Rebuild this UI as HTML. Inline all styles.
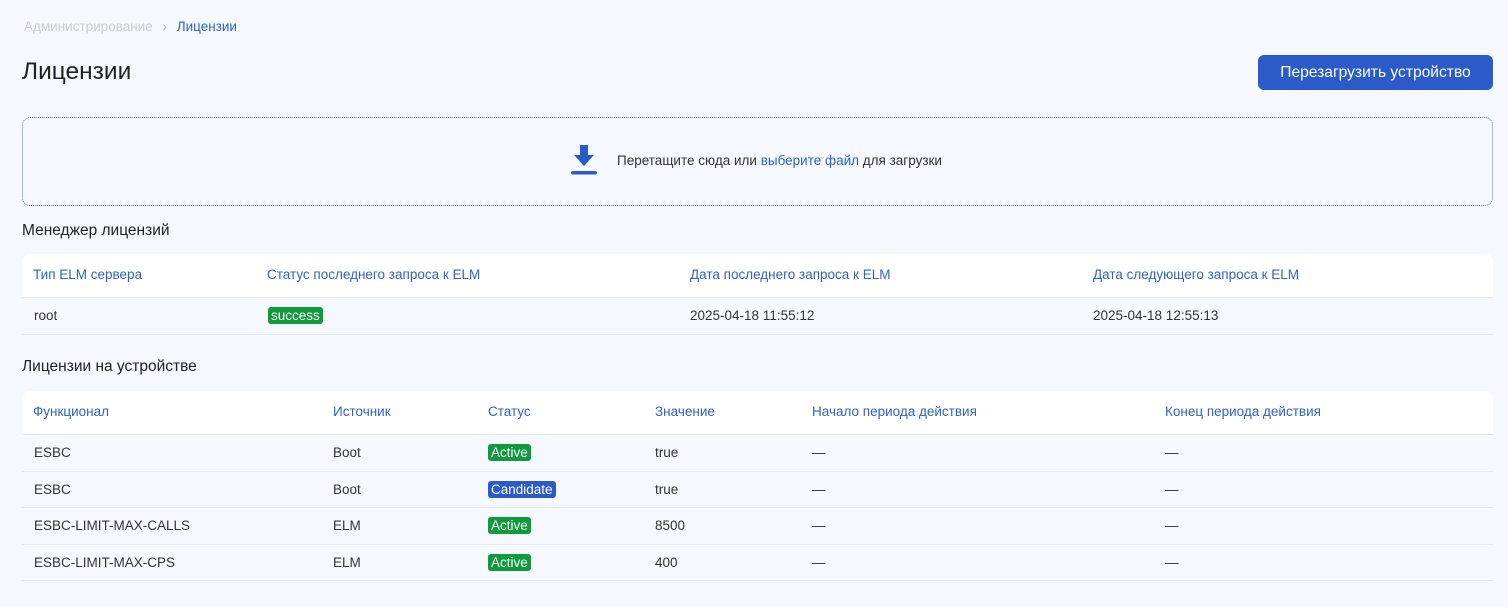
<!DOCTYPE html>
<html><head><meta charset="utf-8"><style>
body{margin:0;background:#f5f8ff;font-family:"Liberation Sans","DejaVu Sans",sans-serif;font-size:13.5px;color:#333;width:1508px;height:607px;position:relative;overflow:hidden}
.a{position:absolute;white-space:nowrap}
.bc{top:19px;left:24px;font-size:13.5px;color:#ccc}
.bc span{color:#2f63c8}
h1{position:absolute;left:22px;top:58px;margin:0;font-size:24.5px;font-weight:normal;color:#222}
.btn{position:absolute;left:1258px;top:55px;width:235px;height:35px;background:#2a5bc9;border-radius:6px;color:#fff;font-size:15.6px;text-align:center;line-height:35px}
.drop{position:absolute;left:22px;top:117px;width:1469px;height:87px;border:1px dotted #5a78c8;border-radius:8px}
.h2{font-size:15.5px;color:#222}
.tb{position:absolute;left:22px;width:1471px}
.hd{background:#fff;border-radius:8px 8px 0 0;height:43px;position:relative;border-bottom:1px solid #e4e8f0}
.row{height:35.6px;position:relative;border-bottom:1px solid #e4e8f0}
.hd .c{color:#2f63c8;top:13px}
.c{position:absolute;top:10px;white-space:nowrap}
.bd{color:#fff;padding:1px 3px;border-radius:3px;background:#0f9a3c}
.bl{background:#2a5bc9}
</style></head><body>
<div class="a bc">Администрирование <span style="color:#9bb6e6;margin:0 6px">›</span> <span>Лицензии</span></div>
<h1>Лицензии</h1>
<div class="btn">Перезагрузить устройство</div>
<div class="drop"></div>
<svg class="a" style="left:570px;top:144px" width="28" height="32" viewBox="0 0 28 32"><path d="M10 1h8v10h6L14 22 4 11h6z" fill="#2a5bc9"/><rect x="1" y="27" width="26" height="3.5" rx="1.7" fill="#2a5bc9"/></svg>
<div class="a" style="left:617px;top:153px">Перетащите сюда или <span style="color:#2f63c8">выберите файл</span> для загрузки</div>
<div class="a h2" style="left:22px;top:222px">Менеджер лицензий</div>
<div class="tb" style="top:254px">
<div class="hd"><div class="c" style="left:11px">Тип ELM сервера</div><div class="c" style="left:245px">Статус последнего запроса к ELM</div><div class="c" style="left:668px">Дата последнего запроса к ELM</div><div class="c" style="left:1071px">Дата следующего запроса к ELM</div></div>
<div class="row"><div class="c" style="left:12px">root</div><div class="c" style="left:246px"><span class="bd">success</span></div><div class="c" style="left:668px">2025-04-18 11:55:12</div><div class="c" style="left:1071px">2025-04-18 12:55:13</div></div>
</div>
<div class="a h2" style="left:22px;top:358px">Лицензии на устройстве</div>
<div class="tb" style="top:391px">
<div class="hd"><div class="c" style="left:11px">Функционал</div><div class="c" style="left:311px">Источник</div><div class="c" style="left:466px">Статус</div><div class="c" style="left:633px">Значение</div><div class="c" style="left:790px">Начало периода действия</div><div class="c" style="left:1143px">Конец периода действия</div></div>
<div class="row"><div class="c" style="left:12px">ESBC</div><div class="c" style="left:311px">Boot</div><div class="c" style="left:466px"><span class="bd">Active</span></div><div class="c" style="left:633px">true</div><div class="c" style="left:790px">—</div><div class="c" style="left:1143px">—</div></div>
<div class="row"><div class="c" style="left:12px">ESBC</div><div class="c" style="left:311px">Boot</div><div class="c" style="left:466px"><span class="bd bl">Candidate</span></div><div class="c" style="left:633px">true</div><div class="c" style="left:790px">—</div><div class="c" style="left:1143px">—</div></div>
<div class="row"><div class="c" style="left:12px">ESBC-LIMIT-MAX-CALLS</div><div class="c" style="left:311px">ELM</div><div class="c" style="left:466px"><span class="bd">Active</span></div><div class="c" style="left:633px">8500</div><div class="c" style="left:790px">—</div><div class="c" style="left:1143px">—</div></div>
<div class="row"><div class="c" style="left:12px">ESBC-LIMIT-MAX-CPS</div><div class="c" style="left:311px">ELM</div><div class="c" style="left:466px"><span class="bd">Active</span></div><div class="c" style="left:633px">400</div><div class="c" style="left:790px">—</div><div class="c" style="left:1143px">—</div></div>
</div>
</body></html>
